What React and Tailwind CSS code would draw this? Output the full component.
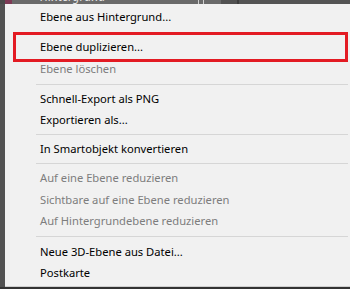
const items = [
  { label: 'Ebene aus Hintergrund...', h: 'h-[22px]' },
  { gap: 'h-[8px]' },
  { label: 'Ebene duplizieren...', h: 'h-[22px]', marked: true },
  { label: 'Ebene löschen', h: 'h-[22px]', disabled: true },
  { sep: 'h-[8px]' },
  { label: 'Schnell-Export als PNG', h: 'h-[22px]' },
  { label: 'Exportieren als...', h: 'h-[20px]' },
  { sep: 'h-[8px]' },
  { label: 'In Smartobjekt konvertieren', h: 'h-[22px]' },
  { sep: 'h-[7px]' },
  { label: 'Auf eine Ebene reduzieren', h: 'h-[22px]', disabled: true },
  { label: 'Sichtbare auf eine Ebene reduzieren', h: 'h-[21px]', disabled: true },
  { label: 'Auf Hintergrundebene reduzieren', h: 'h-[21px]', disabled: true },
  { sep: 'h-[10px]' },
  { label: 'Neue 3D-Ebene aus Datei...', h: 'h-[22px]' },
  { label: 'Postkarte', h: 'h-[19px]' },
]

function MenuRow({ item }) {
  if (item.gap) return <div className={item.gap} />
  if (item.sep) {
    return (
      <div className={`${item.sep} flex items-center ml-[31px] mr-[2px]`}>
        <div className="h-px w-full bg-[#d6d6d6]" />
      </div>
    )
  }
  return (
    <div className={`${item.h} relative flex items-center pl-[35px]`}>
      <span className={item.disabled ? 'text-[#7d7d7d]' : 'text-black'}>{item.label}</span>
      {/* red highlight frame */}
      {item.marked && (
        <div className="absolute -top-[4px] bottom-[-4px] left-[8px] right-[2px] border-[3px] border-[#e31b23]" />
      )}
    </div>
  )
}

export default function App() {
  return (
    <div
      className="w-[350px] h-[289px] bg-[#525252] flex flex-col overflow-hidden"
      style={{ fontFamily: '"Noto Sans", "Open Sans", sans-serif' }}
    >
      {/* layer panel row peeking above the menu */}
      <div className="h-[4px] flex shrink-0 overflow-hidden">
        <div className="w-[221px] bg-[#6a6a6a] relative flex">
          <div className="w-[5px] bg-[#4a4a4a]" />
          <div className="w-[7px] bg-[#7d3a55]" />
          <span className="absolute left-[40px] -top-[9px] text-[12px] italic text-[#e6e6e6] leading-none">Hintergrund</span>
          <div className="absolute left-[198px] top-0 w-[6px] h-[4px] border-x border-[#d0d0d0]" />
        </div>
        <div className="flex-1 bg-[#545454] border-l-2 border-[#3e3e3e] ml-[16px]" />
      </div>

      <div className="flex flex-1 min-h-0">
        <div className="w-[5px] bg-[#525252]" />
        <div className="flex-1 bg-[#f1f1f1] pt-[2px] text-[11.2px] leading-none">
          {items.map((item, i) => (
            <MenuRow key={i} item={item} />
          ))}
        </div>
      </div>

      <div className="h-[3px] shrink-0 flex flex-col">
        <div className="h-px bg-[#cfcfcf] ml-[5px]" />
        <div className="flex-1 bg-[#333333]" />
      </div>
    </div>
  )
}
